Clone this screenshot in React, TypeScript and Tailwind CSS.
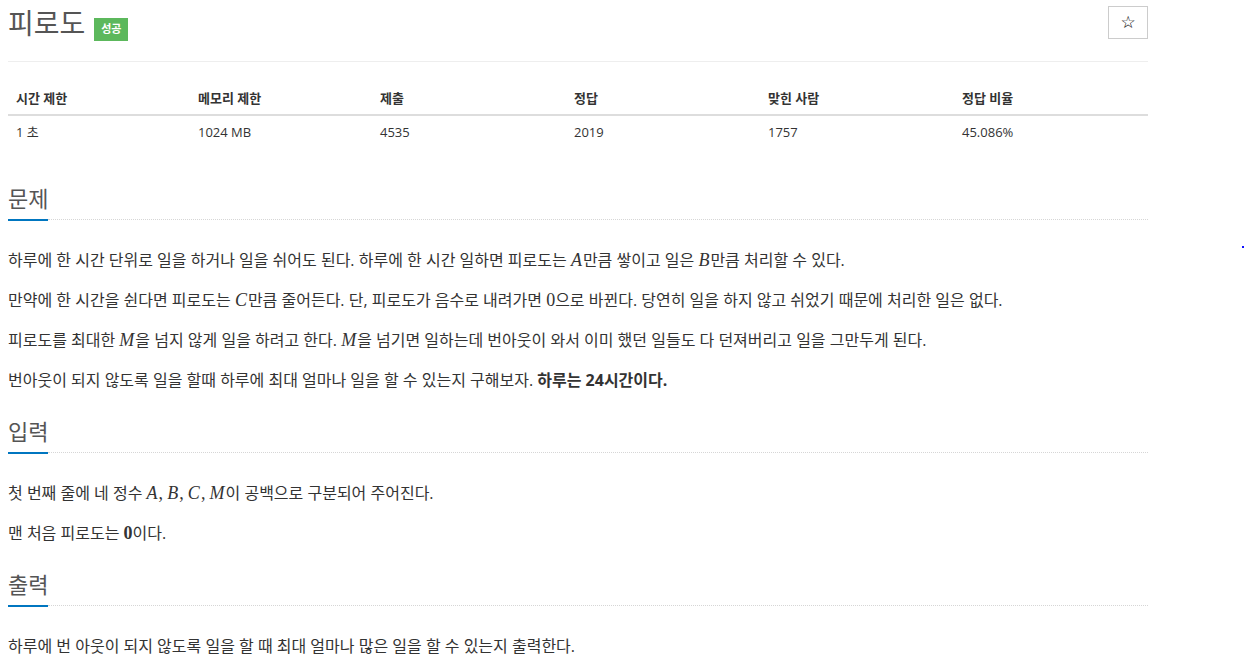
import React from "react";

const sans = "font-['Open_Sans','Noto_Sans_CJK_KR',sans-serif]";

function M({ children }: { children: React.ReactNode }) {
  return (
    <span className="font-['Liberation_Serif',serif] italic text-[18px] pr-[1px]">{children}</span>
  );
}

function N({ children, bold }: { children: React.ReactNode; bold?: boolean }) {
  return (
    <span className={`font-['Liberation_Serif',serif] text-[18px] ${bold ? "font-bold" : ""}`}>{children}</span>
  );
}

function Headline({ title, mt }: { title: string; mt: string }) {
  return (
    <div className={mt}>
      <div className="text-[22px] leading-[32px] text-[#555]">{title}</div>
      <div className="mt-[5px] flex items-start">
        <div className="w-[40px] h-[2px] bg-[#0076c0]" />
        <div className="flex-1 border-t border-dotted border-[#d6d6d6]" />
      </div>
    </div>
  );
}

function P({ children }: { children: React.ReactNode }) {
  return <p className="h-[40px] leading-[40px] text-[16px] text-[#333] whitespace-nowrap">{children}</p>;
}

export default function App() {
  const heads = ["시간 제한", "메모리 제한", "제출", "정답", "맞힌 사람", "정답 비율"];
  const vals = ["1 초", "1024 MB", "4535", "2019", "1757", "45.086%"];
  return (
    <div className={`relative w-[1244px] min-h-[668px] bg-white ${sans}`}>
      <div className="absolute left-[1242px] top-[246px] w-[2px] h-[2px] bg-[#1010ff]" />
      <div className="ml-[8px] w-[1140px]">
        <div className="flex justify-between pt-[6px] pb-[20px] border-b border-[#eee]">
          <div className="flex items-start">
            <span className="text-[28px] leading-[35px] text-[#555]">피로도</span>
            <span className="ml-[9px] mt-[12px] h-[23px] w-[34px] bg-[#5cb85c] text-white text-[11px] font-bold flex items-center justify-center">
              성공
            </span>
          </div>
          <button className="w-[40px] h-[33px] border border-[#ccc] flex items-center justify-center text-[17px] text-black font-['DejaVu_Sans',sans-serif] bg-white">
            ☆
          </button>
        </div>

        <div className="mt-[21px] grid grid-cols-[182px_182px_194px_194px_194px_194px] text-[13px] text-[#333]">
          {heads.map((h) => (
            <div key={h} className="h-[33px] px-[8px] flex items-center font-bold border-b-2 border-[#ddd]">
              {h}
            </div>
          ))}
          {vals.map((v) => (
            <div key={v} className="h-[33px] px-[8px] flex items-center">
              {v}
            </div>
          ))}
        </div>

        <Headline title="문제" mt="mt-[33px]" />
        <div className="mt-[19px]">
          <P>
            하루에 한 시간 단위로 일을 하거나 일을 쉬어도 된다. 하루에 한 시간 일하면 피로도는 <M>A</M>만큼 쌓이고 일은 <M>B</M>만큼 처리할 수 있다.
          </P>
          <P>
            만약에 한 시간을 쉰다면 피로도는 <M>C</M>만큼 줄어든다. 단, 피로도가 음수로 내려가면 <N>0</N>으로 바뀐다. 당연히 일을 하지 않고 쉬었기 때문에 처리한 일은 없다.
          </P>
          <P>
            피로도를 최대한 <M>M</M>을 넘지 않게 일을 하려고 한다. <M>M</M>을 넘기면 일하는데 번아웃이 와서 이미 했던 일들도 다 던져버리고 일을 그만두게 된다.
          </P>
          <P>
            번아웃이 되지 않도록 일을 할때 하루에 최대 얼마나 일을 할 수 있는지 구해보자. <b>하루는 24시간이다.</b>
          </P>
        </div>

        <Headline title="입력" mt="mt-[15px]" />
        <div className="mt-[19px]">
          <P>
            첫 번째 줄에 네 정수 <M>A</M><N>,</N> <M>B</M><N>,</N> <M>C</M><N>,</N> <M>M</M>이 공백으로 구분되어 주어진다.
          </P>
          <P>
            맨 처음 피로도는 <N bold>0</N>이다.
          </P>
        </div>

        <Headline title="출력" mt="mt-[15px]" />
        <div className="mt-[19px]">
          <P>하루에 번 아웃이 되지 않도록 일을 할 때 최대 얼마나 많은 일을 할 수 있는지 출력한다.</P>
        </div>
      </div>
    </div>
  );
}
